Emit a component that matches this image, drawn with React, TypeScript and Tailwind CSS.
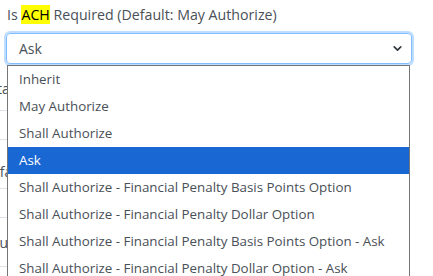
import { ChevronDown } from 'lucide-react';

const options = [
  'Inherit',
  'May Authorize',
  'Shall Authorize',
  'Ask',
  'Shall Authorize - Financial Penalty Basis Points Option',
  'Shall Authorize - Financial Penalty Dollar Option',
  'Shall Authorize - Financial Penalty Basis Points Option - Ask',
  'Shall Authorize - Financial Penalty Dollar Option - Ask',
];

const selected = 'Ask';

export default function App() {
  return (
    <div className="w-[433px] h-[276px] overflow-hidden bg-white text-[#495057]" style={{ fontFamily: '"Open Sans", "Noto Sans", sans-serif' }}>
      <div className="pt-[5px] pl-[7px] text-[14.2px] leading-[20px]">
        Is <span className="bg-[#ffff00] text-black">ACH</span> Required (Default: May Authorize)
      </div>

      <div className="relative mt-[8px] ml-[6px] w-[406px]">
        <div className="h-[31px] rounded-[4px] border border-[#80bdff] shadow-[0_0_0_2px_rgba(0,123,255,0.25)] flex items-center justify-between pl-[12px] pr-[7px] text-[14px]">
          <span>Ask</span>
          <ChevronDown size={13} strokeWidth={3.2} className="text-[#343a40]" />
        </div>

        {/* open list */}
        <div className="absolute left-[1px] top-[32px] w-[403px] border border-[#767676] bg-white z-10 text-[13.35px]">
          {options.map(o => (
            <div
              key={o}
              className={`h-[27px] flex items-center pl-[11px] ${o === selected ? 'bg-[#1967d2] text-white' : 'text-[#495057]'}`}
            >
              {o}
            </div>
          ))}
        </div>
      </div>

      {/* form content behind the list */}
      <div className="w-[300px] text-[14px] text-[#495057]">
        <div className="h-[46px] flex items-end pb-[11px]">
          <span className="ml-[-3px]">ta</span>
        </div>
        <div className="h-[29px] border-t border-[#dee2e6]"></div>
        <div className="h-[49px] border-t border-[#dee2e6] flex items-center pt-[14px]">
          <span className="ml-[-8px]">efa</span>
        </div>
        <div className="h-[29px] border-t border-[#dee2e6]"></div>
        <div className="h-[49px] border-t border-[#dee2e6] flex items-center">
          <span className="ml-[-9px]">ou</span>
        </div>
        <div className="border-t border-[#dee2e6]"></div>
      </div>
    </div>
  );
}
